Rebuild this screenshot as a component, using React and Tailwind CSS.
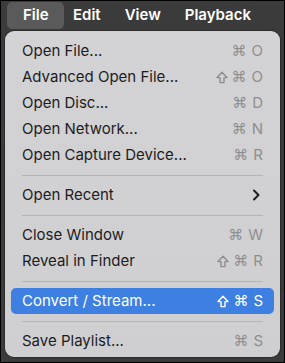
import React from "react";

const F = { fontFamily: "Inter, 'DejaVu Sans', sans-serif" };

function Shift({ color }) {
  return (
    <svg width="12" height="13" viewBox="0 0 12 13" className="mt-[1px]">
      <path d="M6 1.2 L11 6.6 H8 V11.6 H4 V6.6 H1 Z" fill="none" stroke={color} strokeWidth="1.4" strokeLinejoin="round" />
    </svg>
  );
}

function Keys({ keys, active }) {
  const color = active ? "#ffffff" : "#8e8e90";
  return (
    <div className={`flex items-center gap-[3px] text-[15px] ${active ? "text-white" : "text-[#8e8e90]"}`}>
      {keys.map((k, i) =>
        k === "⇧" ? (
          <Shift key={i} color={color} />
        ) : (
          <span
            key={i}
            className={k === "⌘" ? "text-[15px] ml-[1px]" : "ml-[2px]"}
            style={k === "⌘" ? { fontFamily: "'DejaVu Sans', sans-serif" } : undefined}
          >
            {k}
          </span>
        )
      )}
    </div>
  );
}

function Row({ label, keys, active, chevron }) {
  return (
    <div
      className={`mx-[6px] h-[26px] rounded-[5px] px-[11px] flex items-center justify-between ${
        active ? "bg-[#3d80e2] text-white" : "text-[#1c1c1e]"
      }`}
    >
      <span className="text-[15px]">{label}</span>
      {chevron ? (
        <svg width="10" height="14" viewBox="0 0 10 14" className="mr-[2px]">
          <path d="M3 2.5 L7.5 7 L3 11.5" fill="none" stroke="#1c1c1e" strokeWidth="2" strokeLinecap="round" strokeLinejoin="round" />
        </svg>
      ) : (
        <Keys keys={keys} active={active} />
      )}
    </div>
  );
}

function Sep() {
  return (
    <div className="h-[14px] flex items-center px-[17px]">
      <div className="h-[1px] w-full bg-[#b5b5b7]" />
    </div>
  );
}

export default function App() {
  return (
    <div style={F} className="w-[285px] h-[363px] bg-[#3b3b3b] border border-black flex flex-col overflow-hidden">
      <div className="h-[29px] flex items-center text-white font-semibold text-[15px] shrink-0">
        <div className="ml-[6px] w-[57px] h-[27px] rounded-[5px] bg-[#5a5a5a] flex items-center pl-[16px]">File</div>
        <div className="ml-[9px]">Edit</div>
        <div className="ml-[24px]">View</div>
        <div className="ml-[24px]">Playback</div>
      </div>
      <div className="mx-[4px] mt-[1px] h-[326px] rounded-[9px] bg-gradient-to-b from-[#d3d3d5] to-[#cfcfd1] pt-[7px] shadow-[0_0_0_1px_rgba(0,0,0,0.25)]">
        <Row label="Open File..." keys={["⌘", "O"]} />
        <Row label="Advanced Open File..." keys={["⇧", "⌘", "O"]} />
        <Row label="Open Disc..." keys={["⌘", "D"]} />
        <Row label="Open Network..." keys={["⌘", "N"]} />
        <Row label="Open Capture Device..." keys={["⌘", "R"]} />
        <Sep />
        <Row label="Open Recent" chevron />
        <Sep />
        <Row label="Close Window" keys={["⌘", "W"]} />
        <Row label="Reveal in Finder" keys={["⇧", "⌘", "R"]} />
        <Sep />
        <Row label="Convert / Stream..." keys={["⇧", "⌘", "S"]} active />
        <Sep />
        <Row label="Save Playlist..." keys={["⌘", "S"]} />
      </div>
    </div>
  );
}
